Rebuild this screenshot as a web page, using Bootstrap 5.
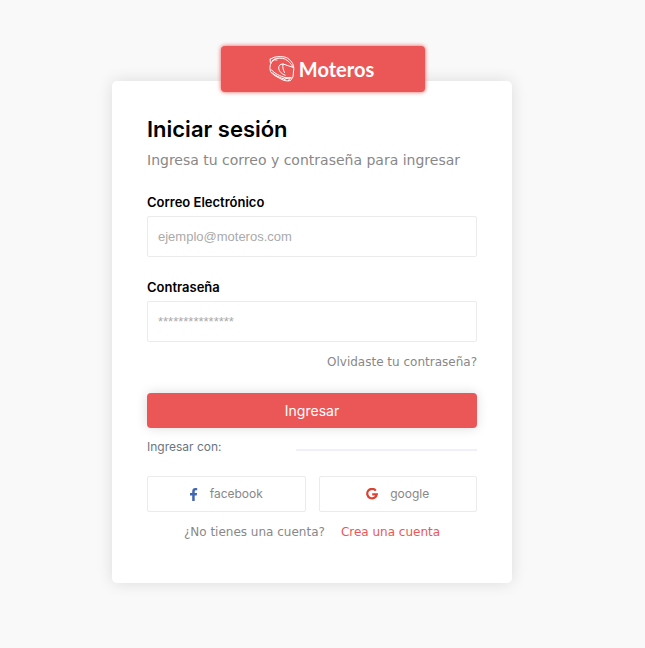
<!DOCTYPE html>
<html lang="es">
<head>
<meta charset="utf-8">
<meta name="viewport" content="width=device-width, initial-scale=1">
<title>Moteros - Iniciar sesión</title>
<link href="https://cdn.jsdelivr.net/npm/bootstrap@5.3.0/dist/css/bootstrap.min.css" rel="stylesheet">
<style>
  body { background: #f9f9f9; font-family: "Inter", "Noto Sans", sans-serif; font-size: 12px; line-height: 20px; color: #888; }
  a { color: inherit; }
  .brand { width: 204px; height: 46px; margin-top: 46px; margin-bottom: -11px; padding-right: 2px; background: #eb5757; box-shadow: 0 0 4px #eb5757; border-radius: 4px; color: #fff; font-family: "Lato", sans-serif; font-size: 20px; gap: 4px; z-index: 1; }
  .login { width: 100%; max-width: 400px; padding: 35px 35px 41px; background: #fff; border-radius: 5px; box-shadow: 0 0 16px rgba(0, 0, 0, .12); }
  .login-wrap { padding-right: 21px; }
  .title { font-size: 22px; line-height: 26px; margin-bottom: 8px; color: #000; }
  .subtitle { font: 14px/20px "DejaVu Sans", sans-serif; margin-bottom: 22px; }
  .field-label { font-size: 13px; margin-bottom: 4px; color: #000; }
  .semi { font-weight: 600; }
  .field { height: 41px; padding: 0 10px; border: 1px solid #ebebeb; border-radius: 2px; font: 13px "Liberation Sans", Arial, sans-serif; }
  .field::placeholder { color: #aaa; }
  .field-group { margin-bottom: 20px; }
  .spaced { font: 12px/20px "DejaVu Sans", sans-serif; }
  .forgot { margin-top: -10px; margin-bottom: 21px; }
  .enter { height: 35px; padding: 0; border: 0; border-radius: 4px; background: #eb5757; color: #fff; font-size: 14px; box-shadow: 0 0 12px rgba(0, 0, 0, .14); }
  .enter:hover { background: #d94848; color: #fff; }
  .with { margin-top: 9px; margin-bottom: 19px; color: #6c757d; }
  .rule { width: 55%; height: 2px; margin-top: 5px; background: #f0effb; }
  .social-row { gap: 13px; margin-bottom: 10px; }
  .social { height: 36px; padding: 0; border: 1px solid #ebebeb; border-radius: 2px; color: #888; font-size: 12px; gap: 12px; }
  .signup { gap: 16px; }
  .create { color: #eb5757; }
</style>
</head>
<body class="min-vh-100">
<main class="d-flex flex-column align-items-center min-vh-100">
  <div class="brand d-flex align-items-center justify-content-center fw-bold">
    <svg width="26" height="26" viewBox="0 0 26 26" fill="none" stroke="#fff" stroke-width="1" stroke-linecap="round" stroke-linejoin="round" aria-hidden="true">
      <path d="M1.200 3.200 5 1.300C10 .2 17 .2 20 3.200c3 3 4.800 5 4.800 9.300L24 21l-2.500 3.500c-3 1-6 .2-8.500-1C8 20.800 3.500 19 1.500 15.500.5 12.500.8 9 2.300 6.500L6 2.500"/>
      <path d="M1.200 3.200v3.300l1.100.3M3 5l4.500-2.500c4.500-.8 8.500-.3 11.500 2.500 2.500 2.300 4.200 4.500 5.500 6.500M5.500 3.800l2.500.2"/>
      <path d="M24.500 11.500 14 8c-3 0-4.500 1.800-4.300 4 .2 3.500 3 6 6.500 7.200M14 8c-.6 3.500.2 6 1.500 8.500"/>
      <path d="M2 13.500c4 4.500 9 6.500 14 8l6.500.5M2.500 16.500c4 3 8.500 5.500 13 6.500l6.500-1.500M15 24l2.500-2M19.500 24.500 21 22"/>
    </svg>
    <span>Moteros</span>
  </div>
  <div class="login-wrap w-100 d-flex justify-content-center">
    <form class="login">
      <h1 class="title semi">Iniciar sesión</h1>
      <p class="subtitle">Ingresa tu correo y contraseña para ingresar</p>
      <div class="field-group">
        <label class="field-label semi d-block" for="email">Correo Electrónico</label>
        <input class="field form-control" id="email" type="email" placeholder="ejemplo@moteros.com">
      </div>
      <div class="field-group">
        <label class="field-label semi d-block" for="password">Contraseña</label>
        <input class="field form-control" id="password" type="password" placeholder="***************">
      </div>
      <div class="forgot spaced text-end"><a class="text-decoration-none" href="#">Olvidaste tu contraseña?</a></div>
      <button class="enter btn w-100" type="submit">Ingresar</button>
      <div class="with d-flex align-items-center justify-content-between">
        <span>Ingresar con:</span><span class="rule"></span>
      </div>
      <div class="social-row d-flex">
        <button class="social btn flex-fill w-50 d-flex align-items-center justify-content-center" type="button">
          <svg width="8" height="13" viewBox="0 0 8 13" fill="#4267b2" aria-hidden="true"><path d="M2.200 13V7.400H0V5h2.200V3.300C2.200 1.200 3.400 0 5.300 0c.9 0 1.900.2 1.900.2v2.100H6.100c-1 0-1.400.6-1.400 1.300V5h2.400l-.4 2.400h-2V13z"/></svg>
          <span>facebook</span>
        </button>
        <button class="social btn flex-fill w-50 d-flex align-items-center justify-content-center" type="button">
          <svg width="12" height="12" viewBox="0 0 12 12" fill="none" stroke="#de4032" stroke-width="2.200" aria-hidden="true"><path d="M9.800 2.600A4.800 4.800 0 1 0 10.800 6.300H6.200"/></svg>
          <span>google</span>
        </button>
      </div>
      <div class="signup spaced d-flex justify-content-center">
        <span>¿No tienes una cuenta?</span>
        <a class="create text-decoration-none" href="#">Crea una cuenta</a>
      </div>
    </form>
  </div>
</main>
<script src="https://cdn.jsdelivr.net/npm/bootstrap@5.3.0/dist/js/bootstrap.bundle.min.js"></script>
</body>
</html>
